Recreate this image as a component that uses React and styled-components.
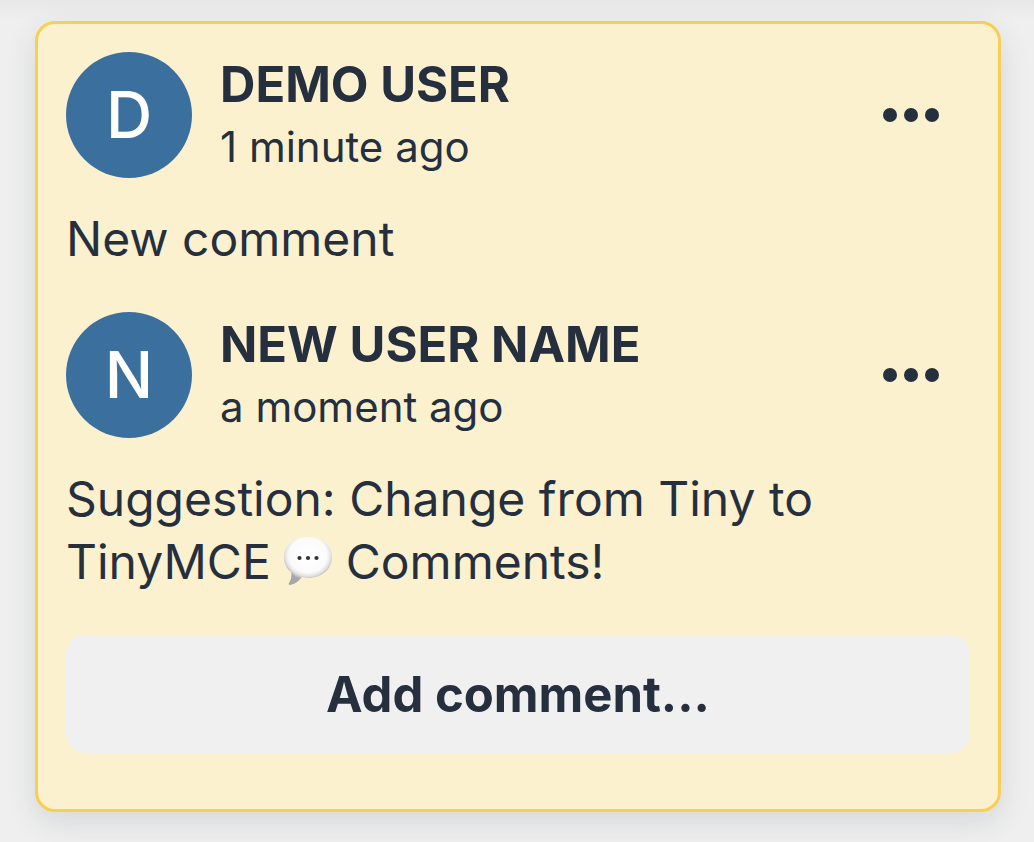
import React from 'react';
import styled, { createGlobalStyle } from 'styled-components';

const Global = createGlobalStyle`
  * { box-sizing: border-box; }
  body {
    margin: 0;
    background: #efefef;
    color: #252f3e;
    font-family: Inter, "Liberation Sans", sans-serif;
  }
`;

const Page = styled.main`
  min-height: 100vh;
  padding: 21px 33px 30px 35px;
  background: linear-gradient(#e7e7e7, #efefef 20px);
`;

const Card = styled.section`
  padding: 28px 28px 56px;
  border: 3px solid #f7cf53;
  border-radius: 20px;
  background: #fcf1cf;
  box-shadow: 0 10px 30px rgba(34, 47, 62, 0.12);
`;

const Comment = styled.article`
  margin-bottom: 42px;
`;

const Header = styled.header`
  display: flex;
  align-items: center;
  gap: 28px;
`;

const Avatar = styled.svg`
  flex: none;
  width: 126px;
  height: 126px;
  font-size: 64px;
  font-weight: 450;
`;

const Meta = styled.div`
  flex: 1;
  align-self: flex-start;
`;

const Author = styled.h2`
  margin: 0;
  font-size: 49px;
  font-weight: 700;
  line-height: 66px;
`;

const Time = styled.div`
  font-size: 42px;
  line-height: 58px;
`;

const MenuButton = styled.button`
  display: flex;
  margin-right: 29px;
  padding: 0;
  border: 0;
  background: none;
  color: inherit;
  cursor: pointer;
`;

const Body = styled.p`
  margin: 29px 0 0;
  font-size: 48px;
  line-height: 63px;
`;

const Bubble = styled.svg`
  width: 48px;
  height: 50px;
  vertical-align: -7px;
`;

const AddButton = styled.button`
  display: block;
  width: 100%;
  padding: 28px 20px 26px;
  border: 0;
  border-radius: 20px;
  background: #f0f0f0;
  color: inherit;
  font: 700 49px/64px Inter, "Liberation Sans", sans-serif;
  cursor: pointer;
`;

function CommentHeader({ initial, name, time }) {
  return (
    <Header>
      <Avatar viewBox="0 0 126 126" role="img" aria-label={name}>
        <circle cx="63" cy="63" r="63" fill="#3b6f9e" />
        <text x="63" y="86" textAnchor="middle" fill="#fff">{initial}</text>
      </Avatar>
      <Meta>
        <Author>{name}</Author>
        <Time>{time}</Time>
      </Meta>
      <MenuButton type="button" aria-label="Comment actions">
        <svg width="60" height="20" viewBox="0 0 60 20" fill="currentColor">
          <circle cx="9" cy="10" r="7" />
          <circle cx="30" cy="10" r="7" />
          <circle cx="51" cy="10" r="7" />
        </svg>
      </MenuButton>
    </Header>
  );
}

function SpeechBubble() {
  return (
    <Bubble viewBox="1 0 48 50" role="img" aria-label="speech balloon">
      <defs>
        <radialGradient id="bubble" gradientUnits="userSpaceOnUse" cx="0" cy="0" r="1" gradientTransform="translate(25 19) scale(27 25)">
          <stop offset="0" stopColor="#fff" />
          <stop offset="0.7" stopColor="#fbfbfb" />
          <stop offset="0.85" stopColor="#e2e2e2" />
          <stop offset="1" stopColor="#a6a6a6" />
        </radialGradient>
      </defs>
      <path d="M25 1C11 1 1 9 1 21c0 7 3 12 7 15 1 4 0 8-2 11-1 1 0 2 1 2 5-1 9-4 12-8l6 1c14 0 24-9 24-21S39 1 25 1Z" fill="url(#bubble)" />
      <circle cx="16.5" cy="22" r="2.1" fill="#333" />
      <circle cx="25" cy="22" r="2.1" fill="#333" />
      <circle cx="33.5" cy="22" r="2.1" fill="#333" />
    </Bubble>
  );
}

export default function App() {
  return (
    <>
      <Global />
      <Page>
        <Card>
          <Comment>
            <CommentHeader initial="D" name="DEMO USER" time="1 minute ago" />
            <Body>New comment</Body>
          </Comment>
          <Comment>
            <CommentHeader initial="N" name="NEW USER NAME" time="a moment ago" />
            <Body>
              Suggestion: Change from Tiny to TinyMCE <SpeechBubble /> Comments!
            </Body>
          </Comment>
          <AddButton type="button">Add comment...</AddButton>
        </Card>
      </Page>
    </>
  );
}
